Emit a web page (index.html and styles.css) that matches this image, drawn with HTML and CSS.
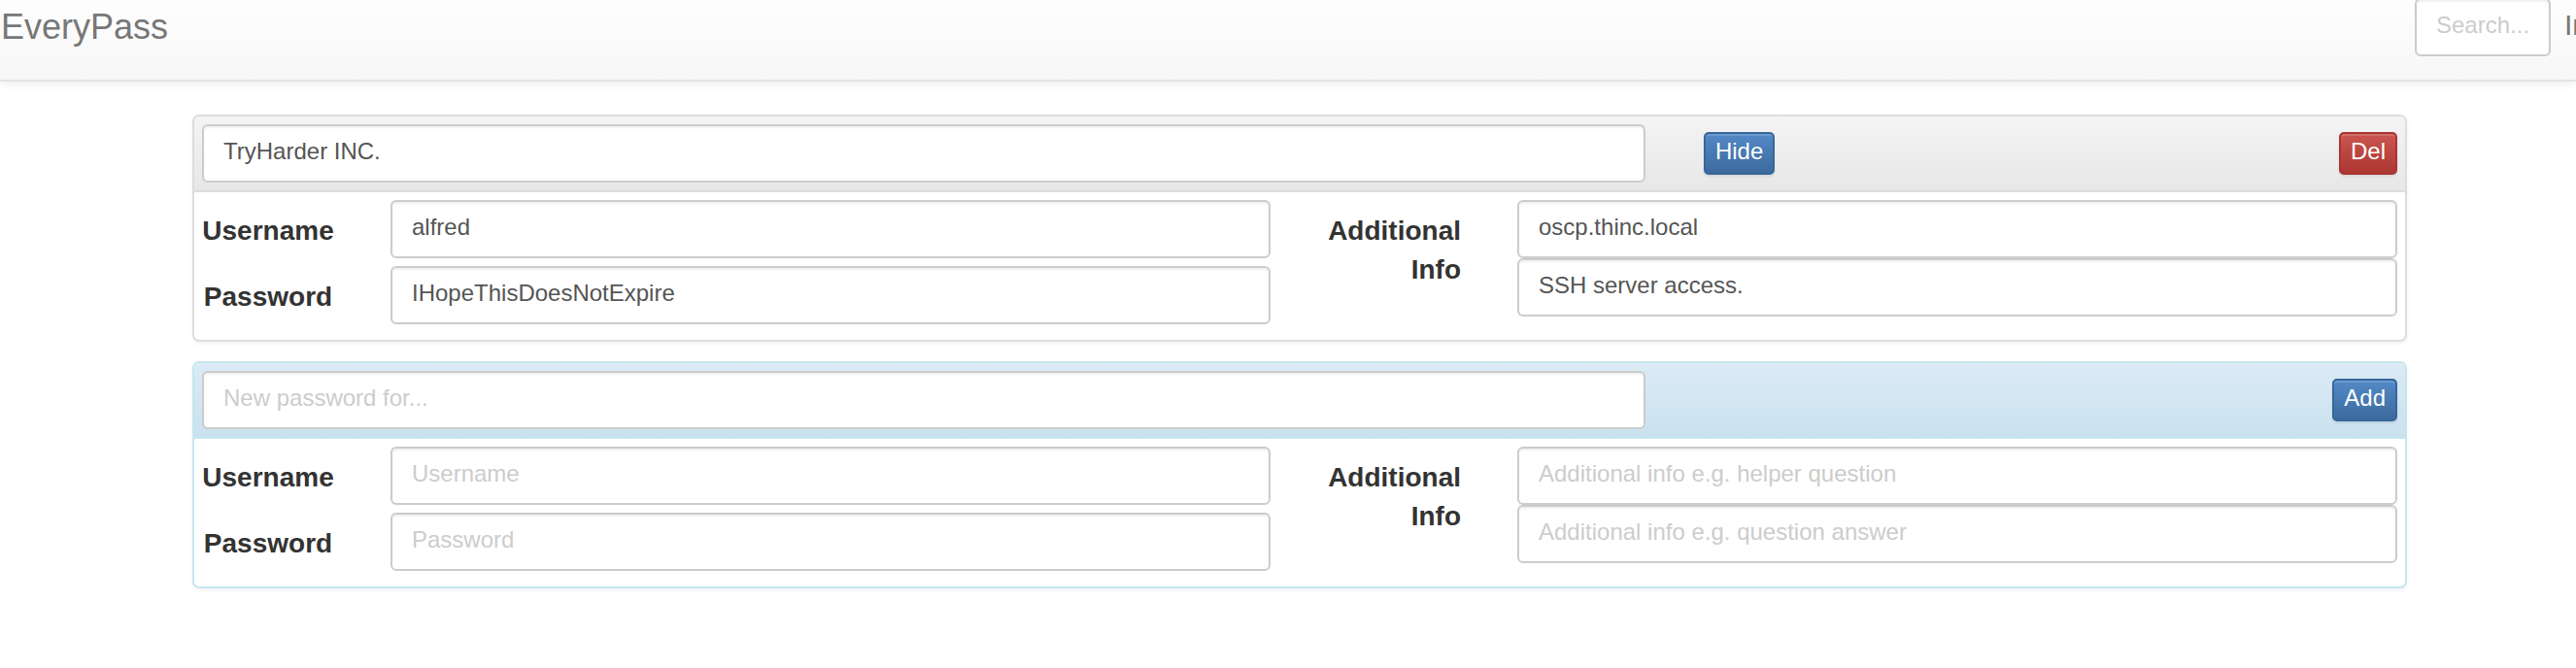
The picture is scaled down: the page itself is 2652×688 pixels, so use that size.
FILE: index.html
```
<!DOCTYPE html>
<html lang="en">
<head>
<meta charset="utf-8">
<title>EveryPass</title>
<link rel="stylesheet" href="styles.css">
</head>
<body>
<nav class="navbar">
  <a class="brand" href="#">EveryPass</a>
  <div class="nav-tools">
    <input class="field search" type="text" placeholder="Search..." aria-label="Search">
    <a class="nav-link" href="#">In</a>
  </div>
</nav>
<main class="container">
  <form class="panel">
    <div class="panel-heading">
      <input class="field title-field" type="text" value="TryHarder INC." aria-label="Title">
      <button class="btn btn-primary toggle" type="button">Hide</button>
      <button class="btn btn-danger action" type="button">Del</button>
    </div>
    <div class="panel-body">
      <div class="labels">
        <label for="user1">Username</label>
        <label for="pass1">Password</label>
      </div>
      <div class="fields spaced">
        <input class="field" id="user1" type="text" value="alfred">
        <input class="field" id="pass1" type="text" value="IHopeThisDoesNotExpire">
      </div>
      <label class="info-label" for="info1">Additional Info</label>
      <div class="fields">
        <input class="field" id="info1" type="text" value="oscp.thinc.local">
        <input class="field" type="text" value="SSH server access." aria-label="Additional info, second line">
      </div>
    </div>
  </form>
  <form class="panel panel-info">
    <div class="panel-heading">
      <input class="field title-field" type="text" placeholder="New password for..." aria-label="New title">
      <button class="btn btn-primary action" type="button">Add</button>
    </div>
    <div class="panel-body">
      <div class="labels">
        <label for="user2">Username</label>
        <label for="pass2">Password</label>
      </div>
      <div class="fields spaced">
        <input class="field" id="user2" type="text" placeholder="Username">
        <input class="field" id="pass2" type="text" placeholder="Password">
      </div>
      <label class="info-label" for="info2">Additional Info</label>
      <div class="fields">
        <input class="field" id="info2" type="text" placeholder="Additional info e.g. helper question">
        <input class="field" type="text" placeholder="Additional info e.g. question answer" aria-label="Additional info answer">
      </div>
    </div>
  </form>
</main>
</body>
</html>
```
FILE: styles.css
```
* { box-sizing: border-box; }

body {
  margin: 0;
  background: #fff;
  color: #333;
  font-family: "Liberation Sans", Arial, sans-serif;
  font-size: 28px;
  line-height: 40px;
  overflow-x: hidden;
}

.navbar {
  display: flex;
  justify-content: space-between;
  align-items: flex-start;
  height: 84px;
  background: linear-gradient(#fefefe, #f7f7f7);
  border-bottom: 2px solid #e5e5e5;
  box-shadow: 0 2px 10px rgba(0, 0, 0, 0.075);
}

.brand {
  padding: 8px 0 0 1px;
  color: #777;
  font-size: 36px;
  text-decoration: none;
}

.nav-tools {
  display: flex;
  width: 166px;
  margin-top: -2px;
}

.nav-link {
  padding: 8px 0 0 14px;
  color: #777;
  font-size: 30px;
  text-decoration: none;
}

.field {
  display: block;
  width: 100%;
  height: 60px;
  padding: 12px 20px 16px;
  border: 2px solid #ccc;
  border-radius: 6px;
  background: #fff;
  color: #555;
  font-family: inherit;
  font-size: 24px;
  line-height: 28px;
  box-shadow: inset 0 2px 2px rgba(0, 0, 0, 0.06);
}

.field::placeholder {
  color: #ccc;
  opacity: 1;
}

.search { flex: 0 0 140px; }

.container { padding: 34px 174px 0 198px; }

.panel {
  margin-bottom: 20px;
  border: 2px solid #ddd;
  border-radius: 7px;
  background: #fff;
  box-shadow: 0 2px 4px rgba(0, 0, 0, 0.05);
}

.panel-heading {
  display: flex;
  align-items: center;
  padding: 8px;
  border-bottom: 2px solid #ddd;
  border-radius: 5px 5px 0 0;
  background: linear-gradient(#f4f4f4, #e7e7e7);
}

.panel-info { border-color: #c5e6ef; }

.panel-info .panel-heading {
  border-color: #c5e6ef;
  background: linear-gradient(#dcebf5, #c9e1ef);
}

.title-field { flex: 0 0 65.75%; }

.btn {
  height: 44px;
  padding: 0 10px 4px;
  border: 2px solid;
  border-radius: 5px;
  color: #fff;
  font-family: inherit;
  font-size: 24px;
  line-height: 36px;
  box-shadow: inset 0 2px 0 rgba(255, 255, 255, 0.15), 0 2px 2px rgba(0, 0, 0, 0.075);
}

.btn-primary {
  border-color: #37669a;
  background: linear-gradient(#5389c7, #3c6a9d);
}

.btn-danger {
  border-color: #a93431;
  background: linear-gradient(#ca5551, #ac3732);
}

.toggle { margin-left: 60px; }

.action { margin-left: auto; }

.panel-body {
  display: grid;
  grid-template-columns: 194px 1fr 254px 1fr;
  padding: 8px 8px 16px;
}

label { font-weight: bold; }

.labels {
  display: flex;
  flex-direction: column;
  align-items: center;
  gap: 28px;
  padding: 12px 58px 0 0;
}

.fields {
  display: flex;
  flex-direction: column;
}

.spaced { gap: 8px; }

.info-label {
  padding: 12px 58px 0;
  text-align: right;
}
```
